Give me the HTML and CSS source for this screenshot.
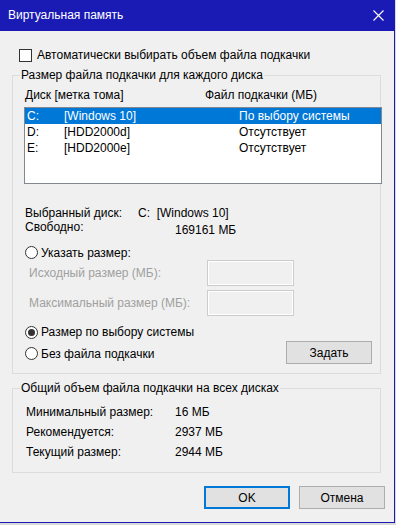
FILE: index.html
```html
<!DOCTYPE html>
<html lang="ru">
<head>
  <meta charset="UTF-8">
  <title>Виртуальная память</title>
  <link rel="stylesheet" href="styles.css">
</head>
<body>
  <div class="window">
    <div class="titlebar">
      <span class="title">Виртуальная память</span>
      <svg class="close" width="11" height="11" viewBox="0 0 11 11">
        <path d="M0.5 0.5 L10.5 10.5 M10.5 0.5 L0.5 10.5" stroke="#fff" stroke-width="1.1" fill="none"/>
      </svg>
    </div>
    <div class="content">
      <label class="check-row"><span class="checkbox"></span>Автоматически выбирать объем файла подкачки</label>

      <fieldset class="group">
        <legend>Размер файла подкачки для каждого диска</legend>
        <div class="list-head">
          <span class="col-disk">Диск [метка тома]</span>
          <span>Файл подкачки (МБ)</span>
        </div>
        <div class="listbox">
          <div class="list-row selected"><span>C:</span><span>[Windows 10]</span><span>По выбору системы</span></div>
          <div class="list-row"><span>D:</span><span>[HDD2000d]</span><span>Отсутствует</span></div>
          <div class="list-row"><span>E:</span><span>[HDD2000e]</span><span>Отсутствует</span></div>
        </div>

        <div class="info-row first">
          <span class="info-label">Выбранный диск:</span>
          <span>C:&nbsp; [Windows 10]</span>
        </div>
        <div class="info-row second">
          <span class="info-label wide">Свободно:</span>
          <span class="info-value">169161 МБ</span>
        </div>

        <label class="radio-row custom"><span class="radio"></span>Указать размер:</label>
        <div class="size-row">
          <span class="size-label">Исходный размер (МБ):</span>
          <span class="textbox"></span>
        </div>
        <div class="size-row next">
          <span class="size-label">Максимальный размер (МБ):</span>
          <span class="textbox"></span>
        </div>

        <label class="radio-row system"><span class="radio checked"></span>Размер по выбору системы</label>
        <div class="last-row">
          <label class="radio-row none"><span class="radio"></span>Без файла подкачки</label>
          <button class="btn set-btn">Задать</button>
        </div>
      </fieldset>

      <fieldset class="group total">
        <legend>Общий объем файла подкачки на всех дисках</legend>
        <div class="total-row"><span class="total-label">Минимальный размер:</span><span>16 МБ</span></div>
        <div class="total-row"><span class="total-label">Рекомендуется:</span><span>2937 МБ</span></div>
        <div class="total-row"><span class="total-label">Текущий размер:</span><span>2944 МБ</span></div>
      </fieldset>

      <div class="dialog-buttons">
        <button class="btn default">OK</button>
        <button class="btn">Отмена</button>
      </div>
    </div>
  </div>
</body>
</html>
```

FILE: styles.css
```css
:root {
  --title-blue: #1a1ab5;
  --face: #f0f0f0;
  --group-line: #dcdcdc;
  --select: #0078d7;
  --disabled: #a0a0a0;
}
body {
  margin: 0;
  background: #dadada;
  font-family: 'Liberation Sans', Arial, sans-serif;
  font-size: 12px;
  color: #000;
}
/* Window frame */
.window {
  width: 394px;
  height: 522px;
  background: var(--face);
  border-right: 1px solid var(--title-blue);
  border-bottom: 1px solid var(--title-blue);
}
.titlebar {
  height: 31px;
  background: var(--title-blue);
  color: #fff;
  display: flex;
  align-items: center;
  justify-content: space-between;
  padding: 0 10px 0 8px;
}
.title { line-height: 31px; }
.close { display: block; margin-top: -1px; }

.content {
  padding: 0 9px 0 12px;
}
/* Checkbox */
.check-row {
  display: flex;
  align-items: center;
  height: 16px;
  margin-top: 16px;
  padding-left: 7px;
}
.checkbox {
  width: 13px;
  height: 13px;
  box-sizing: border-box;
  border: 1px solid #333;
  background: #fff;
  margin-right: 5px;
}
/* Group boxes */
.group {
  width: 369px;
  box-sizing: border-box;
  margin: 4px 0 0 0;
  padding: 4px 0 9px 11px;
  border: 1px solid var(--group-line);
  min-width: 0;
}
.group legend {
  margin-left: -4px;
  padding: 0 1px;
  line-height: 16px;
}
.list-head {
  display: flex;
  line-height: 16px;
  padding-left: 1px;
}
.col-disk { width: 180px; }
.listbox {
  width: 358px;
  height: 77px;
  box-sizing: border-box;
  margin-top: 4px;
  border: 1px solid #828790;
  background: #fff;
}
.list-row {
  display: grid;
  grid-template-columns: 37px 175px 1fr;
  height: 16px;
  line-height: 16px;
  padding-left: 2px;
}
.list-row.selected {
  background: var(--select);
  color: #fff;
}
/* Selected drive info */
.info-row {
  display: flex;
  align-items: flex-start;
  line-height: 14px;
  padding-left: 1px;
}
.info-row.first { margin-top: 22px; }
.info-label { width: 113px; }
.info-label.wide { width: 150px; }
.info-value { padding-top: 3px; }
/* Radios */
.radio-row {
  display: flex;
  align-items: center;
  height: 15px;
  padding-left: 1px;
}
.radio-row.custom { margin-top: 8px; }
.radio-row.system { margin-top: 8px; height: 16px; }
.radio-row.none { padding-top: 2px; }
.radio {
  width: 13px;
  height: 13px;
  box-sizing: border-box;
  border: 1px solid #333;
  border-radius: 50%;
  background: #fff;
  margin-right: 3px;
  display: flex;
  align-items: center;
  justify-content: center;
}
.radio.checked::after {
  content: "";
  width: 7px;
  height: 7px;
  border-radius: 50%;
  background: #333;
}
/* Custom size */
.size-row {
  display: flex;
  align-items: center;
  height: 26px;
  padding-left: 5px;
  color: var(--disabled);
}
.size-row.next { margin-top: 4px; }
.size-label { width: 178px; }
.textbox {
  width: 87px;
  height: 26px;
  box-sizing: border-box;
  border: 1px solid #cccccc;
  box-shadow: inset 0 0 0 1px #fff;
  background: var(--face);
}
.last-row {
  display: flex;
  align-items: center;
  justify-content: space-between;
  margin-top: 1px;
  padding-right: 8px;
}
/* Buttons */
.btn {
  width: 86px;
  height: 23px;
  box-sizing: border-box;
  border: 1px solid #adadad;
  background: #e1e1e1;
  font-family: inherit;
  font-size: 12px;
  color: #000;
  padding: 0;
}
.btn.default {
  border: 2px solid var(--select);
}
/* Totals */
.group.total {
  margin-top: 6px;
  padding: 6px 0 10px 11px;
}
.total-row {
  display: flex;
  line-height: 20px;
  padding-left: 2px;
}
.total-label { width: 149px; }
.dialog-buttons {
  display: flex;
  justify-content: flex-end;
  gap: 9px;
  margin-top: 13px;
}
```
